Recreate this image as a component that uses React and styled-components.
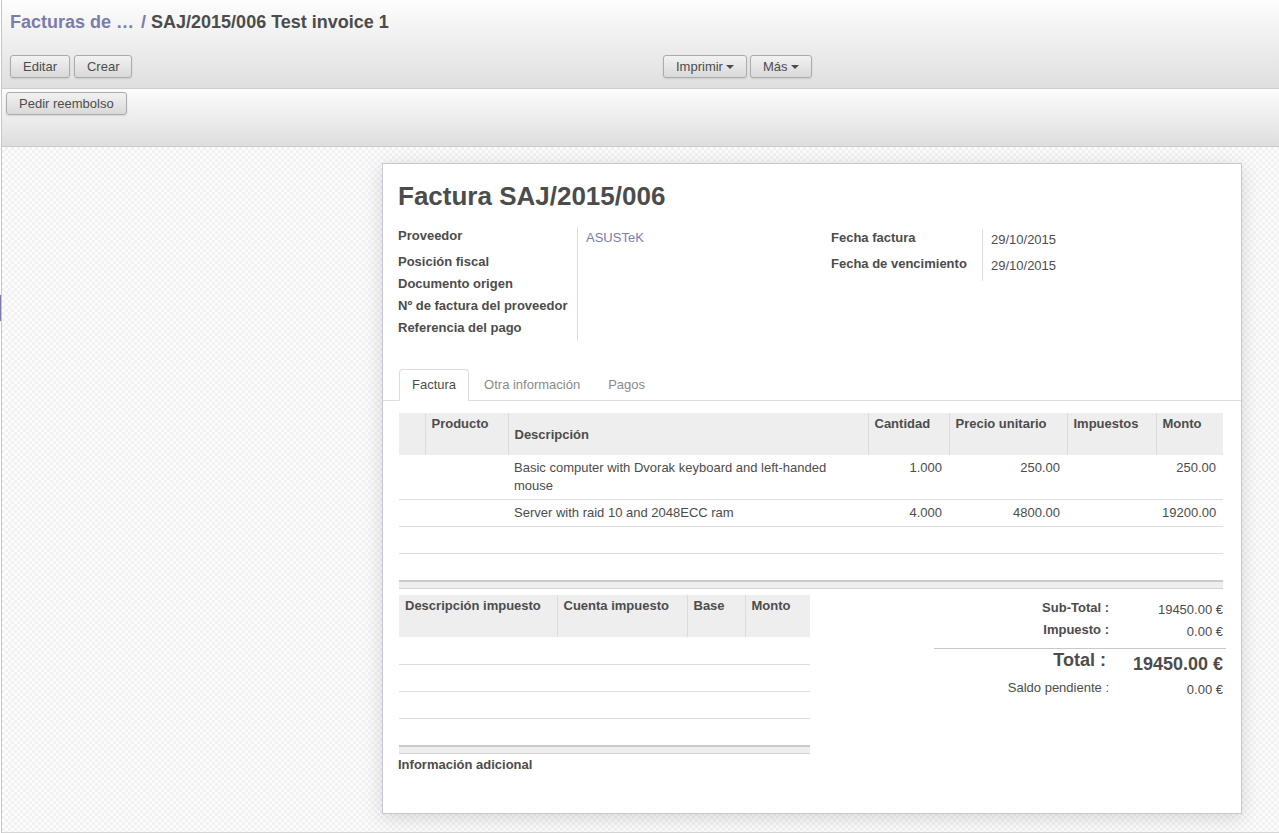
import React from 'react'
import styled, { createGlobalStyle } from 'styled-components'

const GlobalStyle = createGlobalStyle`
  html, body { margin: 0; padding: 0; }
  body {
    font-family: "Liberation Sans", Arial, sans-serif;
    font-size: 13px;
    color: #4c4c4c;
    background: #fff;
  }
  * { box-sizing: border-box; }
`

const lines = [
  { desc: 'Basic computer with Dvorak keyboard and left-handed mouse', qty: '1.000', price: '250.00', amount: '250.00' },
  { desc: 'Server with raid 10 and 2048ECC ram', qty: '4.000', price: '4800.00', amount: '19200.00' },
]

const App = () => {
  return (
    <Page>
      <GlobalStyle />
      <Strip>
        <StripMark />
      </Strip>
      <Main>
        <TopBar>
          <Breadcrumb>
            <Crumb>Facturas de …</Crumb>
            <Slash>/</Slash>
            <span>SAJ/2015/006 Test invoice 1</span>
          </Breadcrumb>
          <ButtonRow>
            <Group>
              <Button>Editar</Button>
              <Button>Crear</Button>
            </Group>
            <Group $gap={3}>
              <Button>Imprimir<Caret /></Button>
              <Button>Más<Caret /></Button>
            </Group>
          </ButtonRow>
        </TopBar>
        <StatusBar>
          <Button>Pedir reembolso</Button>
        </StatusBar>

        <Content>
          <Sheet>
            <Title>Factura SAJ/2015/006</Title>

            <Fields>
              <FieldGrid $label={180} $rows="26px repeat(4, 22px)">
                <Label $top={0}>Proveedor</Label>
                <Value $top={2}><Link>ASUSTeK</Link></Value>
                <Label>Posición fiscal</Label>
                <Value />
                <Label>Documento origen</Label>
                <Value />
                <Label>Nº de factura del proveedor</Label>
                <Value />
                <Label>Referencia del pago</Label>
                <Value />
              </FieldGrid>
              <FieldGrid $label={152} $rows="26px 26px" $offset={2}>
                <Label $top={0}>Fecha factura</Label>
                <Value $top={2}>29/10/2015</Value>
                <Label $top={0}>Fecha de vencimiento</Label>
                <Value $top={2}>29/10/2015</Value>
              </FieldGrid>
            </Fields>

            <Tabs>
              <Tab $active>Factura</Tab>
              <Tab>Otra información</Tab>
              <Tab>Pagos</Tab>
            </Tabs>

            <Table $width={824}>
              <colgroup>
                <col style={{ width: 26 }} />
                <col style={{ width: 83 }} />
                <col style={{ width: 360 }} />
                <col style={{ width: 81 }} />
                <col style={{ width: 118 }} />
                <col style={{ width: 89 }} />
                <col style={{ width: 67 }} />
              </colgroup>
              <thead>
                <tr>
                  <Th />
                  <Th>Producto</Th>
                  <Th $middle>Descripción</Th>
                  <Th>Cantidad</Th>
                  <Th>Precio unitario</Th>
                  <Th>Impuestos</Th>
                  <Th>Monto</Th>
                </tr>
              </thead>
              <tbody>
                {lines.map((l, i) => (
                  <tr key={i}>
                    <Td />
                    <Td />
                    <Td>{l.desc}</Td>
                    <Td $num>{l.qty}</Td>
                    <Td $num>{l.price}</Td>
                    <Td />
                    <Td $num>{l.amount}</Td>
                  </tr>
                ))}
                {[0, 1].map((i) => (
                  <tr key={'e' + i}>
                    <EmptyTd colSpan={7} />
                  </tr>
                ))}
              </tbody>
            </Table>
            <FootBar $width={824} />

            <Lower>
              <TaxBlock>
                <Table $width={411}>
                  <colgroup>
                    <col style={{ width: 158 }} />
                    <col style={{ width: 130 }} />
                    <col style={{ width: 58 }} />
                    <col style={{ width: 65 }} />
                  </colgroup>
                  <thead>
                    <tr>
                      <Th>Descripción impuesto</Th>
                      <Th>Cuenta impuesto</Th>
                      <Th>Base</Th>
                      <Th>Monto</Th>
                    </tr>
                  </thead>
                  <tbody>
                    {[0, 1, 2, 3].map((i) => (
                      <tr key={i}>
                        <EmptyTd colSpan={4} />
                      </tr>
                    ))}
                  </tbody>
                </Table>
                <FootBar $width={411} />
                <Extra>Información adicional</Extra>
              </TaxBlock>

              <Totals>
                <TotalLabel>Sub-Total :</TotalLabel>
                <TotalValue>19450.00 €</TotalValue>
                <TotalLabel>Impuesto :</TotalLabel>
                <TotalValue>0.00 €</TotalValue>
                <Divider />
                <TotalLabel $big>Total :</TotalLabel>
                <TotalValue $big>19450.00 €</TotalValue>
                <TotalLabel $plain>Saldo pendiente :</TotalLabel>
                <TotalValue>0.00 €</TotalValue>
              </Totals>
            </Lower>
          </Sheet>
        </Content>
      </Main>
    </Page>
  )
}

export default App

const Page = styled.div`
  display: flex;
  min-height: 833px;
`

const Strip = styled.div`
  width: 2px;
  flex-shrink: 0;
  border-right: 1px solid #c6c6c6;
  background: #fff;
`

const StripMark = styled.div`
  width: 1px;
  height: 26px;
  margin-top: 295px;
  background: #7c7bad;
`

const Main = styled.div`
  flex: 1;
  display: flex;
  flex-direction: column;
  min-width: 0;
`

const TopBar = styled.div`
  height: 89px;
  padding: 11px 0 0 8px;
  background: linear-gradient(#fdfdfd, #dfdfdf);
  border-bottom: 1px solid #cdcdcd;
`

const Breadcrumb = styled.div`
  font-size: 18px;
  font-weight: bold;
  line-height: 22px;
  color: #4c4c4c;
  white-space: nowrap;
`

const Crumb = styled.span`
  color: #7c7bad;
`

const Slash = styled.span`
  color: #7c7bad;
  margin: 0 5px 0 7px;
`

const ButtonRow = styled.div`
  display: grid;
  grid-template-columns: 653px auto;
  margin-top: 22px;
`

const Group = styled.div`
  display: flex;
  gap: ${(p) => p.$gap || 4}px;
`

const Button = styled.button`
  display: inline-flex;
  align-items: center;
  height: 23px;
  padding: 0 12px;
  border: 1px solid #ababab;
  border-radius: 3px;
  background: linear-gradient(#f2f2f2, #d9d9d9);
  box-shadow: 0 1px 2px rgba(0, 0, 0, 0.1);
  font-family: "Liberation Sans", Arial, sans-serif;
  font-size: 13px;
  color: #4c4c4c;
  cursor: pointer;
`

const Caret = styled.span`
  display: inline-block;
  margin-left: 3px;
  width: 0;
  height: 0;
  border-top: 4px solid #4c4c4c;
  border-left: 4px solid transparent;
  border-right: 4px solid transparent;
`

const StatusBar = styled.div`
  height: 58px;
  padding: 3px 0 0 4px;
  background: linear-gradient(#fcfcfc, #dedede);
  border-bottom: 1px solid #c9c9c9;
`

const Content = styled.div`
  flex: 1;
  padding: 16px 0 16px 380px;
  background: repeating-conic-gradient(#f1f1f1 0 25%, #fcfcfc 0 50%) 0 0 / 6px 6px;
  border-bottom: 1px solid #d6d6d6;
`

const Sheet = styled.div`
  width: 860px;
  min-height: 651px;
  padding: 16px 15px 16px 15px;
  background: #fff;
  border: 1px solid #c8c8d3;
  box-shadow: 0 4px 18px rgba(0, 0, 0, 0.14);
`

const Title = styled.h1`
  margin: 0;
  font-size: 26px;
  line-height: 32px;
  font-weight: bold;
  color: #4c4c4c;
`

const Fields = styled.div`
  display: grid;
  grid-template-columns: 413px 395px;
  column-gap: 20px;
  margin-top: 15px;
  align-items: start;
`

const FieldGrid = styled.div`
  display: grid;
  grid-template-columns: ${(p) => p.$label}px 1fr;
  grid-template-rows: ${(p) => p.$rows};
  margin-top: ${(p) => p.$offset || 0}px;
`

const Label = styled.div`
  padding-top: ${(p) => p.$top || 0}px;
  padding-right: 6px;
  border-right: 1px solid #dcdcdc;
  font-weight: bold;
  line-height: 18px;
  white-space: nowrap;
`

const Value = styled.div`
  padding: ${(p) => p.$top || 0}px 0 0 8px;
  line-height: 18px;
`

const Link = styled.span`
  color: #7c7bad;
`

const Tabs = styled.div`
  display: flex;
  gap: 2px;
  margin: 28px -15px 0;
  padding-left: 16px;
  border-bottom: 1px solid #ddd;
`

const Tab = styled.div`
  height: 32px;
  line-height: 30px;
  padding: 0 12px;
  margin-bottom: -1px;
  border: 1px solid ${(p) => (p.$active ? '#ddd' : 'transparent')};
  border-bottom-color: ${(p) => (p.$active ? '#fff' : 'transparent')};
  border-radius: 4px 4px 0 0;
  background: ${(p) => (p.$active ? '#fff' : 'transparent')};
  color: ${(p) => (p.$active ? '#4c4c4c' : '#8a8a8a')};
`

const Table = styled.table`
  width: ${(p) => p.$width}px;
  margin: 12px 0 0 1px;
  table-layout: fixed;
  border-collapse: collapse;
  color: #4c4c4c;
  font-size: 13px;
`

const Th = styled.th`
  height: 42px;
  padding: 2px 6px 0 6px;
  background: #eee;
  border-left: 1px solid #dcdcdc;
  text-align: left;
  vertical-align: ${(p) => (p.$middle ? 'middle' : 'top')};
  font-weight: bold;
  line-height: 18px;
  white-space: nowrap;
  &:first-child { border-left: none; }
`

const Td = styled.td`
  padding: 4px 7px 4px 6px;
  line-height: 18px;
  border-bottom: 1px solid #ddd;
  text-align: ${(p) => (p.$num ? 'right' : 'left')};
  vertical-align: top;
`

const EmptyTd = styled.td`
  height: 27px;
  padding: 0;
  border-bottom: 1px solid #ddd;
`

const FootBar = styled.div`
  width: ${(p) => p.$width}px;
  height: 9px;
  margin-left: 1px;
  margin-top: -1px;
  background: #eee;
  border-top: 2px solid #cacaca;
  border-bottom: 1px solid #d4d4d4;
`

const Lower = styled.div`
  display: flex;
  justify-content: space-between;
  align-items: flex-start;
`

const TaxBlock = styled.div`
  width: 412px;
  margin-top: -6px;
`

const Extra = styled.div`
  margin-top: 2px;
  font-weight: bold;
  line-height: 18px;
`

const Totals = styled.div`
  display: grid;
  grid-template-columns: 175px 117px;
  width: 292px;
  margin-top: 10px;
`

const TotalLabel = styled.div`
  text-align: right;
  white-space: nowrap;
  padding-right: ${(p) => (p.$big ? 3 : 0)}px;
  font-weight: ${(p) => (p.$plain ? 'normal' : 'bold')};
  font-size: ${(p) => (p.$big ? 18 : 13)}px;
  line-height: ${(p) => (p.$big ? 22 : 18)}px;
  height: ${(p) => (p.$big ? 30 : 22)}px;
`

const TotalValue = styled.div`
  text-align: right;
  padding-right: 3px;
  padding-top: ${(p) => (p.$big ? 4 : 2)}px;
  white-space: nowrap;
  font-weight: ${(p) => (p.$big ? 'bold' : 'normal')};
  font-size: ${(p) => (p.$big ? 18 : 13)}px;
  line-height: ${(p) => (p.$big ? 22 : 18)}px;
`

const Divider = styled.div`
  grid-column: 1 / -1;
  margin-top: 5px;
  border-top: 1px solid #c8c8c8;
`
